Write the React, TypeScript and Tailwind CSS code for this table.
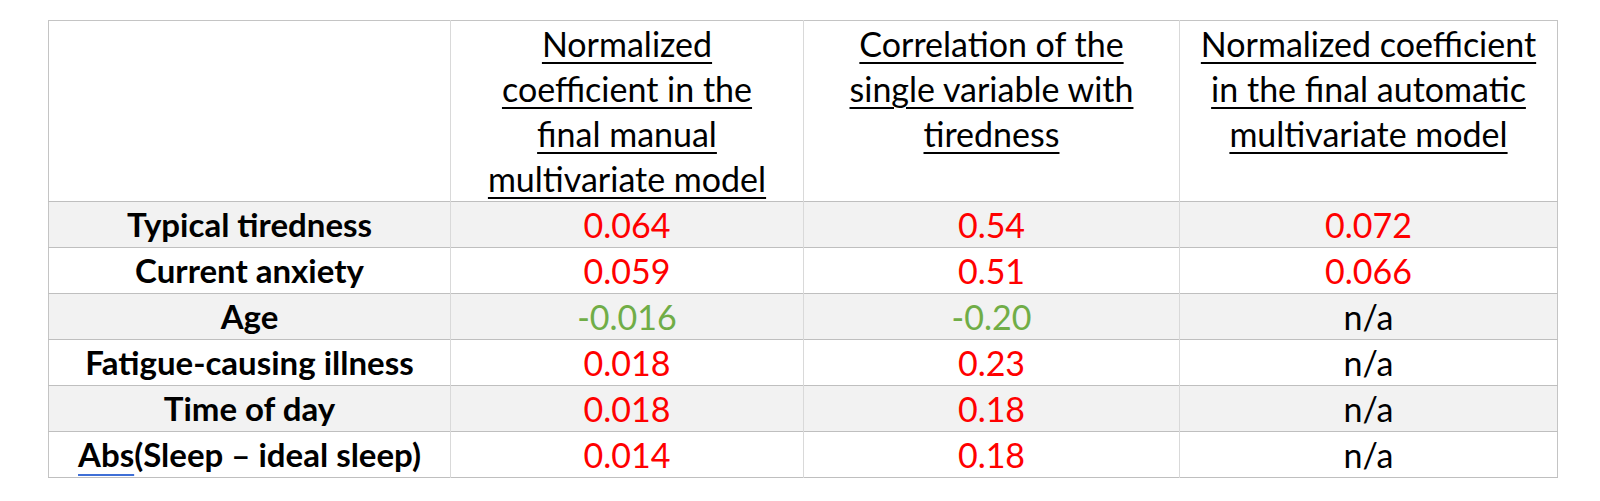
import React from 'react';

type Tone = 'red' | 'green' | 'plain';

interface Row {
    label: React.ReactNode;
    manual: [string, Tone];
    single: [string, Tone];
    auto: [string, Tone];
}

const toneClass: Record<Tone, string> = {
    red: 'text-[#ff0000]',
    green: 'text-[#70ad47]',
    plain: 'text-black',
};

const rows: Row[] = [
    { label: 'Typical tiredness', manual: ['0.064', 'red'], single: ['0.54', 'red'], auto: ['0.072', 'red'] },
    { label: 'Current anxiety', manual: ['0.059', 'red'], single: ['0.51', 'red'], auto: ['0.066', 'red'] },
    { label: 'Age', manual: ['-0.016', 'green'], single: ['-0.20', 'green'], auto: ['n/a', 'plain'] },
    { label: 'Fatigue-causing illness', manual: ['0.018', 'red'], single: ['0.23', 'red'], auto: ['n/a', 'plain'] },
    { label: 'Time of day', manual: ['0.018', 'red'], single: ['0.18', 'red'], auto: ['n/a', 'plain'] },
    {
        label: (
            <>
                <span className="underline decoration-[#3f6fd6] decoration-[1.5px] underline-offset-[7px]">Abs</span>
                (Sleep – ideal sleep)
            </>
        ),
        manual: ['0.014', 'red'],
        single: ['0.18', 'red'],
        auto: ['n/a', 'plain'],
    },
];

// header columns, broken exactly as in the original document
const headers: string[][] = [
    ['Normalized', 'coefficient in the', 'final manual', 'multivariate model'],
    ['Correlation of the', 'single variable with', 'tiredness'],
    ['Normalized coefficient', 'in the final automatic', 'multivariate model'],
];

function HeaderCell({ lines }: { lines: string[] }) {
    return (
        <th className="h-[180px] border-l border-[#d9d9d9] align-top text-center font-normal text-[34px] leading-[45px]">
            {lines.map((line) => (
                <div key={line} className="whitespace-nowrap">
                    <span className="underline decoration-2 underline-offset-[5px]">{line}</span>
                </div>
            ))}
        </th>
    );
}

function ValueCell({ value }: { value: [string, Tone] }) {
    return (
        <td className={`border-l border-[#d9d9d9] text-center text-[34px] leading-[45px] ${toneClass[value[1]]}`}>
            {value[0]}
        </td>
    );
}

export default function App() {
    return (
        <div className="w-[1600px] h-[501px] bg-white pt-[20px] pl-[48px] font-['Lato',sans-serif] text-black">
            <table className="table-fixed border-collapse w-[1509px] border border-[#c4c4c4]">
                <colgroup>
                    <col className="w-[402px]" />
                    <col className="w-[353px]" />
                    <col className="w-[376px]" />
                    <col className="w-[378px]" />
                </colgroup>
                <thead>
                    <tr className="border-b border-[#bfbfbf]">
                        <th className="h-[180px]" />
                        {headers.map((lines) => (
                            <HeaderCell key={lines[0] + lines.length} lines={lines} />
                        ))}
                    </tr>
                </thead>
                <tbody>
                    {rows.map((row, i) => (
                        <tr
                            key={i}
                            className={`h-[46px] border-b border-[#bfbfbf] ${i % 2 === 0 ? 'bg-[#f2f2f2]' : 'bg-white'}`}
                        >
                            <td className="text-center font-bold text-[33px] leading-[45px] whitespace-nowrap">
                                {row.label}
                            </td>
                            <ValueCell value={row.manual} />
                            <ValueCell value={row.single} />
                            <ValueCell value={row.auto} />
                        </tr>
                    ))}
                </tbody>
            </table>
        </div>
    );
}
